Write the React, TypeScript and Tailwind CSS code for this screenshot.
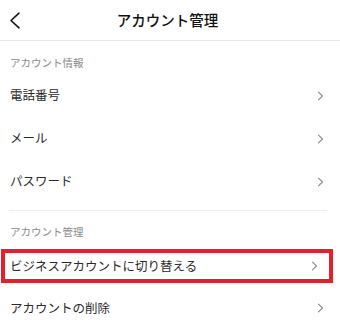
import React from 'react';

const Chevron = () => (
  <svg width="7" height="10" viewBox="0 0 7 10" fill="none" className="shrink-0">
    <path d="M1.5 1.2 L5.5 5 L1.5 8.8" stroke="#8a8a8a" strokeWidth="1.1" strokeLinecap="round" strokeLinejoin="round" />
  </svg>
);

const Row = ({ label }: { label: string }) => (
  <div className="h-[43px] flex items-center justify-between pl-[10px] pr-[16px] text-[12.5px] text-[#2a2a2a]">
    <span>{label}</span>
    <Chevron />
  </div>
);

const App = () => {
  return (
    <div
      className="w-[340px] h-[332px] bg-white overflow-hidden"
      style={{ fontFamily: '"Noto Sans CJK JP", "Noto Sans", sans-serif' }}
    >
      {/* Header */}
      <header className="h-[41px] flex items-center border-b border-[#e8e8e8] relative">
        <svg width="12" height="17" viewBox="0 0 12 17" fill="none" className="ml-[9px] shrink-0">
          <path d="M10 1.2 L2 8.5 L10 15.8" stroke="#111" strokeWidth="1.6" strokeLinecap="round" strokeLinejoin="round" />
        </svg>
        <h1 className="flex-1 text-center pr-[26px] text-[14.5px] font-medium text-[#111]">アカウント管理</h1>
      </header>

      {/* Account info */}
      <div className="h-[33px] pt-[14px] pl-[10px] text-[10.5px] leading-[16px] text-[#8a8a8a]">アカウント情報</div>
      <Row label="電話番号" />
      <Row label="メール" />
      <Row label="パスワード" />

      <div className="mt-[7px] h-px ml-[9px] mr-[13px] bg-[#efefef]" />

      {/* Account management */}
      <div className="h-[38px] pt-[13px] pl-[10px] text-[10.5px] leading-[16px] text-[#8a8a8a]">アカウント管理</div>
      <div className="h-[34px] w-[332px] ml-[1px] border-4 border-[#e3202c] flex items-center justify-between pl-[5px] pr-[11px] text-[12.5px] text-[#2a2a2a]">
        <span>ビジネスアカウントに切り替える</span>
        <Chevron />
      </div>
      <div className="h-[50px] flex items-center justify-between pl-[10px] pr-[16px] text-[12.5px] text-[#2a2a2a]">
        <span>アカウントの削除</span>
        <Chevron />
      </div>
    </div>
  );
};

export default App;
